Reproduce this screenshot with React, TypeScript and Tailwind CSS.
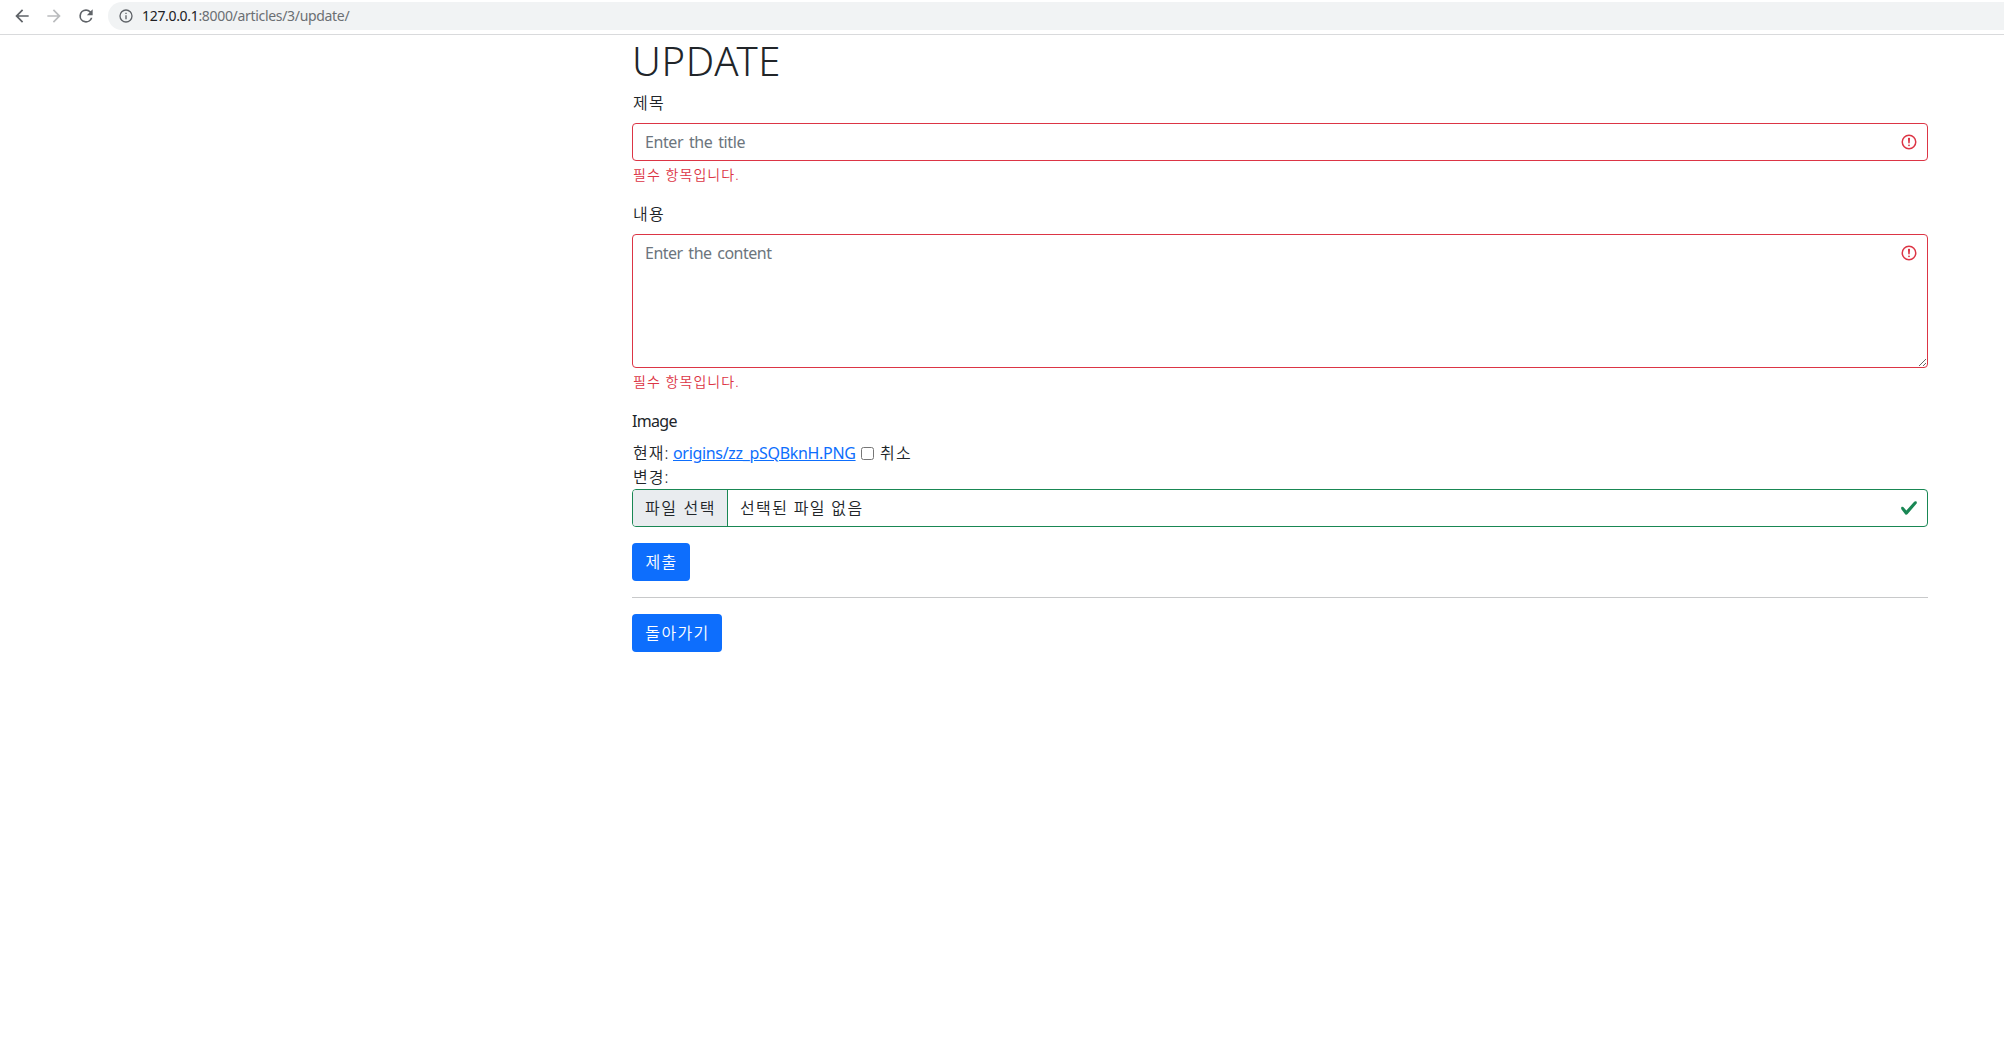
import type { ReactNode } from 'react'

function ErrorIcon({ className }: { className: string }) {
  return (
    <svg className={className} viewBox="0 0 12 12" width="18" height="18" fill="none" stroke="#dc3545">
      <circle cx="6" cy="6" r="4.5" />
      <path strokeLinejoin="round" d="M5.8 3.6h.4L6 6.5z" />
      <circle cx="6" cy="8.2" r=".6" fill="#dc3545" stroke="none" />
    </svg>
  )
}

function Toolbar() {
  return (
    <header className="flex h-[35px] items-start border-b border-[#d9dadc] bg-white pt-[2px]">
      <div className="flex h-7 w-[108px] shrink-0 items-center gap-3 pl-3">
        <svg width="20" height="20" viewBox="0 0 24 24" fill="#5f6368">
          <path d="M20 11H7.83l5.59-5.59L12 4l-8 8 8 8 1.41-1.41L7.83 13H20v-2z" />
        </svg>
        <svg width="20" height="20" viewBox="0 0 24 24" fill="#babcbe">
          <path d="M12 4l-1.41 1.41L16.17 11H4v2h12.17l-5.58 5.59L12 20l8-8z" />
        </svg>
        <svg width="20" height="20" viewBox="0 0 24 24" fill="#5f6368">
          <path d="M17.65 6.35A7.96 7.96 0 0 0 12 4a8 8 0 1 0 7.73 10h-2.08A6 6 0 1 1 12 6c1.66 0 3.14.69 4.22 1.78L13 11h7V4l-2.35 2.35z" />
        </svg>
      </div>
      <div className="flex h-7 flex-1 items-center rounded-l-full bg-[#f1f3f4] pl-[10px]">
        <svg width="16" height="16" viewBox="0 0 24 24" fill="#5f6368">
          <path d="M11 17h2v-6h-2v6zm1-15a10 10 0 1 0 0 20 10 10 0 0 0 0-20zm0 18a8 8 0 1 1 0-16 8 8 0 0 1 0 16zM11 9h2V7h-2v2z" />
        </svg>
        <span className="ml-2 text-[14px] leading-7 tracking-[-0.32px] text-[#6b6f73]">
          <span className="text-[#202124]">127.0.0.1</span>:8000/articles/3/update/
        </span>
      </div>
    </header>
  )
}

function Label({ children }: { children: ReactNode }) {
  return <label className="mb-2 block">{children}</label>
}

function Feedback() {
  return (
    <p className="mt-[3px] pb-px pl-px text-[14px] leading-[21px] tracking-[1.05px] text-[#dc3545]">필수 항목입니다.</p>
  )
}

export default function App() {
  return (
    <div className="min-h-[1052px] bg-white font-['Noto_Sans','Noto_Sans_CJK_KR',sans-serif]">
      <Toolbar />
      <main className="ml-[632px] w-[1296px] text-[16px] leading-6 font-[350] tracking-[1.35px] text-[#212529]">
        <h1 className="mb-1.5 pt-0.5 text-[40px] leading-[48px] font-light tracking-[0.7px]">UPDATE</h1>

        <div className="mb-4">
          <Label>
            <span className="pl-px">제목</span>
          </Label>
          <div className="relative">
            <input
              className="block h-[38px] w-full rounded border border-[#dc3545] px-3 py-1.5 font-normal tracking-[-0.4px] [word-spacing:2px] placeholder:text-[#6c757d] outline-none"
              placeholder="Enter the title"
            />
            <ErrorIcon className="absolute top-[10px] right-[10px]" />
          </div>
          <Feedback />
        </div>

        <div className="mb-4">
          <Label>
            <span className="pl-px">내용</span>
          </Label>
          <div className="relative">
            <textarea
              className="block h-[134px] w-full resize-y rounded border border-[#dc3545] px-3 py-1.5 font-normal tracking-[-0.5px] [word-spacing:2px] placeholder:text-[#6c757d] outline-none"
              placeholder="Enter the content"
            />
            <ErrorIcon className="absolute top-[10px] right-[10px]" />
          </div>
          <Feedback />
        </div>

        <div className="mb-4">
          <Label>
            <span className="font-normal tracking-[-0.7px]">Image</span>
          </Label>
          <div className="flex h-6 items-center">
            <span className="w-[41px] pl-px tracking-[1px]">현재:</span>
            <a className="w-[182px] font-normal tracking-[-0.32px] whitespace-nowrap text-[#0d6efd] underline">origins/zz_pSQBknH.PNG</a>
            <input type="checkbox" className="ml-[6px] size-[13px]" />
            <span className="ml-[6px]">취소</span>
          </div>
          <div className="h-6 pl-px tracking-[1px]">변경:</div>
          <div className="relative flex h-[38px] overflow-hidden rounded border border-[#198754]">
            <span className="w-[95px] border-r border-[#198754] bg-[#e9ecef] pl-3 leading-9 tracking-[1.6px] whitespace-nowrap">파일 선택</span>
            <span className="pl-3 leading-9">선택된 파일 없음</span>
            <svg className="absolute top-[9px] right-[9px]" width="18" height="18" viewBox="0 0 8 8" fill="#198754">
              <path d="M2.3 6.73L.6 4.53c-.4-1.04.46-1.4 1.1-.8l1.1 1.4 3.4-3.8c.6-.63 1.6-.27 1.2.7l-4 4.6c-.43.5-.8.4-1.1.1z" />
            </svg>
          </div>
        </div>

        <button className="block h-[38px] w-[58px] rounded bg-[#0d6efd] pl-px text-white">제출</button>
        <div className="my-4 h-px bg-[#c8c9ca]" />
        <button className="block h-[38px] w-[90px] rounded bg-[#0d6efd] pl-px text-white">돌아가기</button>
      </main>
    </div>
  )
}
